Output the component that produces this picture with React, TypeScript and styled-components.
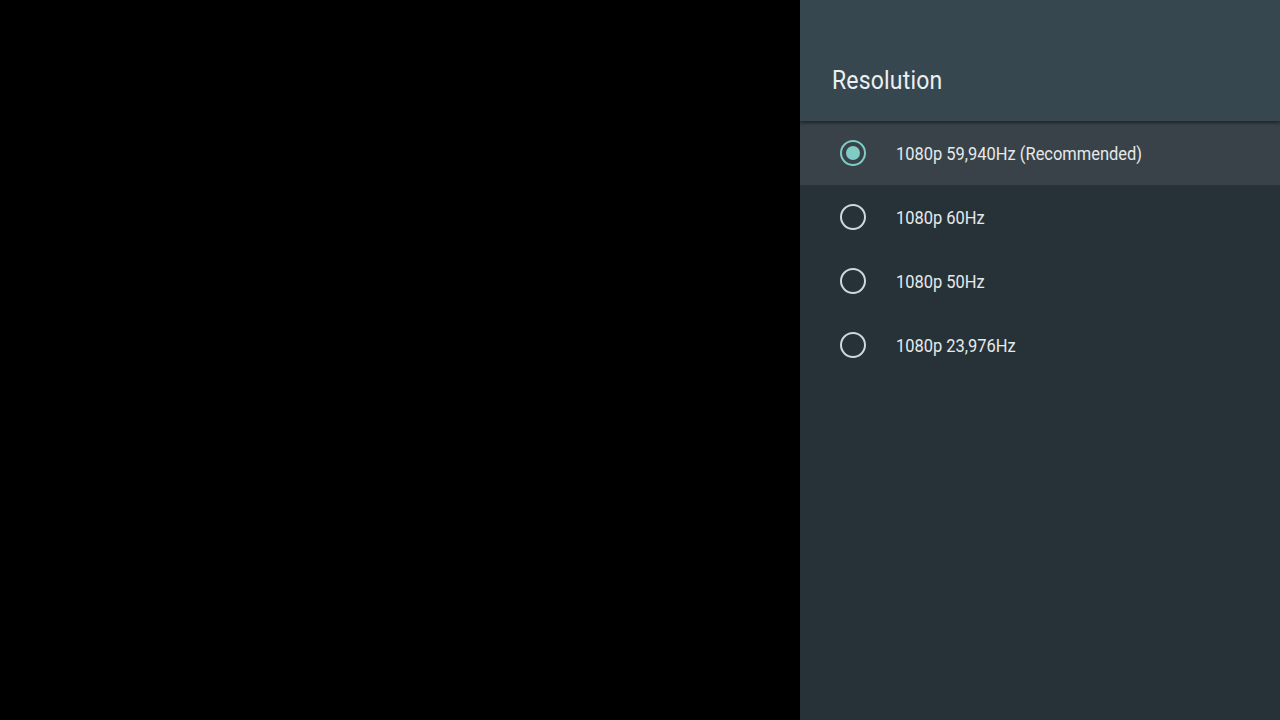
import React from "react";
import styled, { createGlobalStyle } from "styled-components";

const Global = createGlobalStyle`
  html, body { margin: 0; padding: 0; background: #000; }
  body { font-family: "Roboto", "Noto Sans", sans-serif; }
`;

const Screen = styled.div`
  width: 1280px;
  height: 720px;
  display: flex;
  background: #000;
  overflow: hidden;
`;

const Backdrop = styled.div`
  flex: 1;
  background: #000;
`;

const Panel = styled.aside`
  width: 480px;
  display: flex;
  flex-direction: column;
  background: #263238;
`;

const Header = styled.header`
  height: 121px;
  box-sizing: border-box;
  background: #37474f;
  padding: 0 32px 26px;
  display: flex;
  align-items: flex-end;
  box-shadow: 0 2px 3px rgba(0, 0, 0, 0.45);
  position: relative;
  z-index: 1;
`;

const Title = styled.h1`
  margin: 0;
  font-family: "Roboto", sans-serif;
  font-weight: 400;
  font-size: 25px;
  color: #eceff1;
  transform: scaleX(0.92);
  transform-origin: left center;
  letter-spacing: 0.2px;
`;

const List = styled.ul`
  list-style: none;
  margin: 0;
  padding: 0;
  display: flex;
  flex-direction: column;
`;

const Row = styled.li<{ $selected?: boolean }>`
  height: 64px;
  display: flex;
  align-items: center;
  padding-left: 40px;
  gap: 30px;
  background: ${(p) => (p.$selected ? "#384248" : "transparent")};
`;

const Radio = styled.span<{ $checked?: boolean }>`
  width: 26px;
  height: 26px;
  box-sizing: border-box;
  border-radius: 50%;
  border: 2px solid ${(p) => (p.$checked ? "#80cbc4" : "#cfd8dc")};
  display: flex;
  align-items: center;
  justify-content: center;
  &::after {
    content: "";
    width: 14px;
    height: 14px;
    border-radius: 50%;
    background: #80cbc4;
    display: ${(p) => (p.$checked ? "block" : "none")};
  }
`;

const Label = styled.span`
  font-family: "Roboto", sans-serif;
  font-size: 18.5px;
  color: #e6e9eb;
  padding-top: 2px;
  transform: scaleX(0.89);
  transform-origin: left center;
  white-space: nowrap;
`;

const items = [
  "1080p 59,940Hz (Recommended)",
  "1080p 60Hz",
  "1080p 50Hz",
  "1080p 23,976Hz",
];

export default function App() {
  return (
    <>
      <Global />
      <Screen>
        <Backdrop />
        <Panel>
          <Header>
            <Title>Resolution</Title>
          </Header>
          <List>
            {items.map((t, i) => (
              <Row key={t} $selected={i === 0}>
                <Radio $checked={i === 0} />
                <Label>{t}</Label>
              </Row>
            ))}
          </List>
        </Panel>
      </Screen>
    </>
  );
}
